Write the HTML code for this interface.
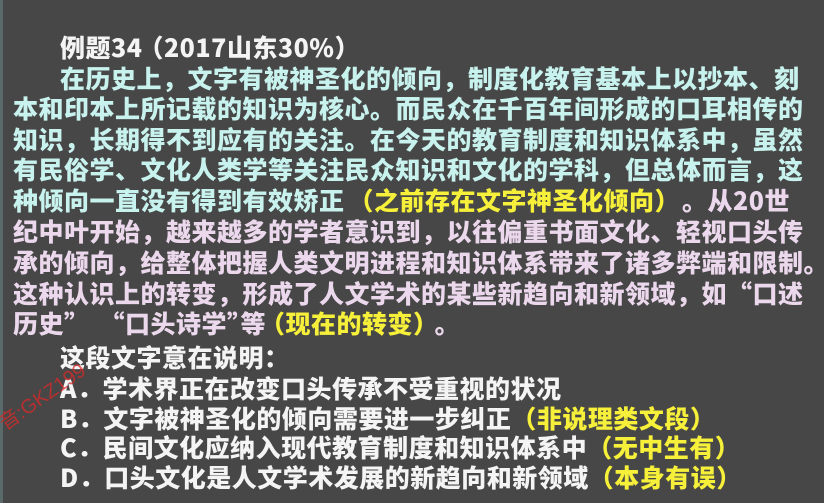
<!DOCTYPE html>
<html><head><meta charset="utf-8"><style>
html,body{margin:0;padding:0}
body{width:824px;height:503px;background:#474747;position:relative;overflow:hidden;font-family:"Liberation Sans","Noto Sans CJK SC",sans-serif;font-weight:bold;font-size:25px}
.l{position:absolute;white-space:nowrap;line-height:28px;height:28px;letter-spacing:0.5px;font-family:"Noto Sans CJK SC","Liberation Sans",sans-serif;font-weight:900}
.c{color:#c8f2ee}.p{color:#ecd8ec}.w{color:#f4f4f4}.y{color:#f6f03a}
.edge{position:absolute;left:0;top:0;width:3px;height:503px;background:#5a6a6a}
.wm{position:absolute;left:-8px;top:412px;color:rgba(220,40,40,.75);font-size:20px;transform:rotate(-35deg);transform-origin:left top;font-weight:normal}
.g{display:inline-block}
</style></head><body>
<div class="edge"></div>
<div class="l w" style="left:60px;top:33px">例题34<span class="g" style="margin-left:-4px">（2017山东30%）</span></div>
<div class="l c" style="left:60px;top:64px">在历史上，文字有被神圣化的倾向，制度化教育基本上以抄本、刻</div>
<div class="l c" style="left:13px;top:94px">本和印本上所记载的知识为核心。而民众在千百年间形成的口耳相传的</div>
<div class="l c" style="left:13px;top:125px">知识，长期得不到应有的关注。在今天的教育制度和知识体系中，虽然</div>
<div class="l c" style="left:13px;top:155px">有民俗学、文化人类学等关注民众知识和文化的学科，但总体而言，这</div>
<div class="l c" style="left:13px;top:186px">种倾向一直没有得到有效矫正<span class="y g" style="margin-left:4px">（之前存在文字神圣化倾向）</span><span class="p g" style="margin-left:2px">。从20世</span></div>
<div class="l p" style="left:13px;top:217px">纪中叶开始，越来越多的学者意识到，以往偏重书面文化、轻视口头传</div>
<div class="l p" style="left:13px;top:248px">承的倾向，给整体把握人类文明进程和知识体系带来了诸多弊端和限制。</div>
<div class="l p" style="left:13px;top:279px">这种认识上的转变，形成了人文学术的某些新趋向和新领域，如“口述</div>
<div class="l p" style="left:13px;top:309px">历史”<span class="g" style="margin-left:10px">“口头诗学”</span><span class="g" style="margin-left:-12px">等</span><span class="y g" style="margin-left:-6px">（现在的转变）</span><span class="g" style="margin-left:-4px">。</span></div>
<div class="l w" style="left:60px;top:343px">这段文字意在说明：</div>
<div class="l w" style="left:60px;top:374px">A．学术界正在改变口头传承不受重视的状况</div>
<div class="l w" style="left:60px;top:404px">B．文字被神圣化的倾向需要进一步纠正<span class="y g" style="margin-left:0px">（非说理类文段）</span></div>
<div class="l w" style="left:60px;top:433px">C．民间文化应纳入现代教育制度和知识体系中<span class="y g" style="margin-left:0px">（无中生有）</span></div>
<div class="l w" style="left:60px;top:463px">D．口头文化是人文学术发展的新趋向和新领域<span class="y g" style="margin-left:0px">（本身有误）</span></div>
<div class="wm">音:GKZ199</div>
</body></html>
